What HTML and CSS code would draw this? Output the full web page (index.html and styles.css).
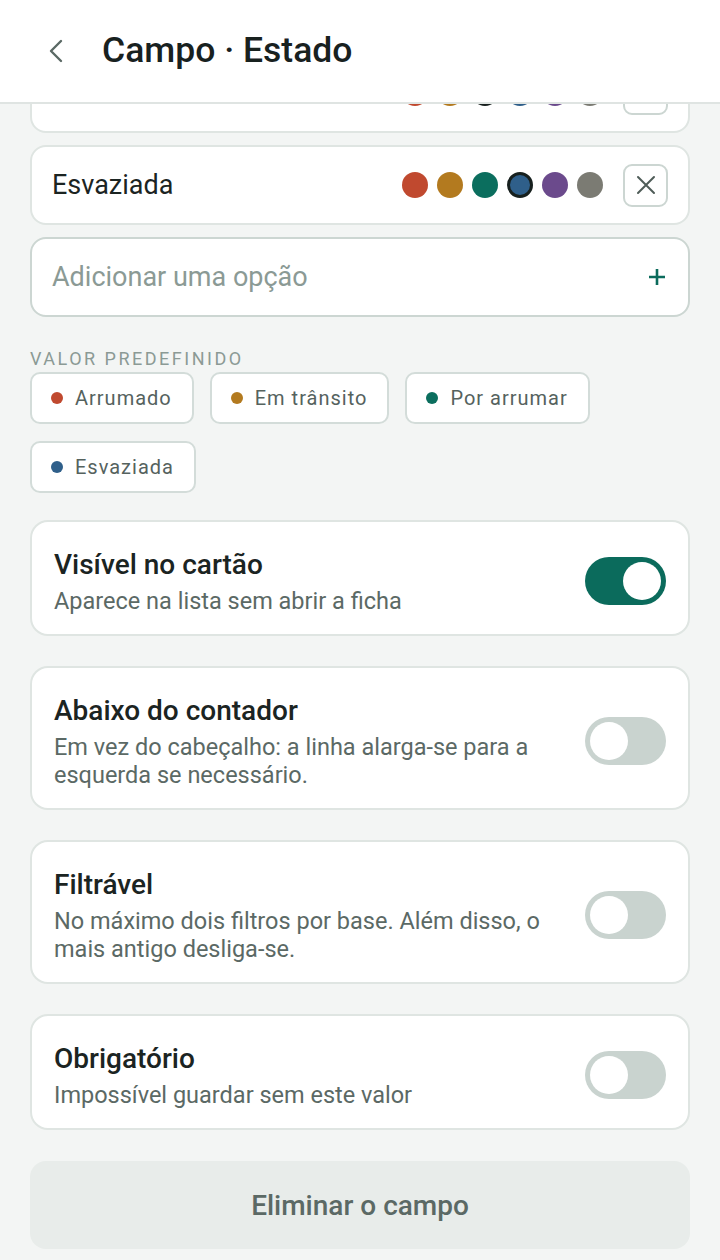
FILE: index.html
```html
<!DOCTYPE html>
<html lang="pt">
<head>
<meta charset="UTF-8">
<meta name="viewport" content="width=device-width, initial-scale=1.0">
<title>Campo · Estado</title>
<link rel="stylesheet" href="styles.css">
</head>
<body>

<header class="topbar">
    <button class="back" aria-label="Voltar">
        <svg width="14" height="24" viewBox="0 0 14 24"><path d="M12 2 L2 12 L12 22" fill="none" stroke="currentColor" stroke-width="2.4" stroke-linecap="round" stroke-linejoin="round"/></svg>
    </button>
    <h1 class="title">Campo · Estado</h1>
</header>

<main class="content">
    <!-- Options -->
    <div class="options">
        <div class="option">
            <span class="option-name">Por arrumar</span>
            <div class="swatches">
                <span class="swatch red"></span>
                <span class="swatch orange"></span>
                <span class="swatch teal selected"></span>
                <span class="swatch blue"></span>
                <span class="swatch purple"></span>
                <span class="swatch grey"></span>
            </div>
            <button class="remove" aria-label="Remover">
                <svg width="20" height="20" viewBox="0 0 20 20"><path d="M2 2 L18 18 M18 2 L2 18" stroke="currentColor" stroke-width="2" stroke-linecap="round"/></svg>
            </button>
        </div>
        <div class="option">
            <span class="option-name">Esvaziada</span>
            <div class="swatches">
                <span class="swatch red"></span>
                <span class="swatch orange"></span>
                <span class="swatch teal"></span>
                <span class="swatch blue selected"></span>
                <span class="swatch purple"></span>
                <span class="swatch grey"></span>
            </div>
            <button class="remove" aria-label="Remover">
                <svg width="20" height="20" viewBox="0 0 20 20"><path d="M2 2 L18 18 M18 2 L2 18" stroke="currentColor" stroke-width="2" stroke-linecap="round"/></svg>
            </button>
        </div>
        <div class="option add">
            <span class="placeholder">Adicionar uma opção</span>
            <svg class="plus" width="18" height="18" viewBox="0 0 18 18"><path d="M9 1 V17 M1 9 H17" stroke="currentColor" stroke-width="2.6"/></svg>
        </div>
    </div>

    <!-- Default value -->
    <div class="label">Valor predefinido</div>
    <div class="chips">
        <span class="chip"><span class="dot red"></span>Arrumado</span>
        <span class="chip"><span class="dot orange"></span>Em trânsito</span>
        <span class="chip"><span class="dot teal"></span>Por arrumar</span>
        <span class="chip"><span class="dot blue"></span>Esvaziada</span>
    </div>

    <!-- Settings -->
    <div class="settings">
        <div class="setting">
            <div class="setting-text">
                <div class="setting-title">Visível no cartão</div>
                <div class="setting-desc">Aparece na lista sem abrir a ficha</div>
            </div>
            <span class="switch on"><span class="knob"></span></span>
        </div>
        <div class="setting">
            <div class="setting-text">
                <div class="setting-title">Abaixo do contador</div>
                <div class="setting-desc">Em vez do cabeçalho: a linha alarga-se para a esquerda se necessário.</div>
            </div>
            <span class="switch"><span class="knob"></span></span>
        </div>
        <div class="setting">
            <div class="setting-text">
                <div class="setting-title">Filtrável</div>
                <div class="setting-desc">No máximo dois filtros por base. Além disso, o mais antigo desliga-se.</div>
            </div>
            <span class="switch"><span class="knob"></span></span>
        </div>
        <div class="setting">
            <div class="setting-text">
                <div class="setting-title">Obrigatório</div>
                <div class="setting-desc">Impossível guardar sem este valor</div>
            </div>
            <span class="switch"><span class="knob"></span></span>
        </div>
    </div>

    <button class="delete">Eliminar o campo</button>
</main>

</body>
</html>
```

FILE: styles.css
```css
* {
    box-sizing: border-box;
}

body {
    margin: 0;
    padding: 0;
    background-color: #f3f5f4;
    color: #1b2422;
    font-family: Roboto, "Noto Sans", sans-serif;
    overflow: hidden;
}

button {
    font-family: inherit;
    border: none;
    background: none;
    padding: 0;
}

.topbar {
    position: sticky;
    top: 0;
    z-index: 10;
    height: 104px;
    display: flex;
    align-items: center;
    background-color: #ffffff;
    border-bottom: 2px solid #dfe4e2;
}

.back {
    display: flex;
    margin-left: 49px;
    color: #5b6965;
}

.title {
    margin: 0 0 2px 39px;
    font-size: 35.5px;
    font-weight: 500;
    color: #18211f;
}

.content {
    margin-top: -51px;
    padding: 0 30px;
}

/* options */
.options {
    display: flex;
    flex-direction: column;
    gap: 12px;
}

.option {
    height: 80px;
    display: flex;
    align-items: center;
    padding: 0 20px;
    background-color: #ffffff;
    border: 2px solid #dfe5e2;
    border-radius: 16px;
}

.option-name {
    flex: 1;
    font-size: 27px;
}

.swatches {
    display: flex;
    gap: 9px;
    margin-right: 20px;
}

.swatch {
    width: 26px;
    height: 26px;
    border-radius: 50%;
}

.swatch.selected {
    border: 3px solid #17201e;
}

.red { background-color: #c0492f; }
.orange { background-color: #b37a1f; }
.teal { background-color: #0b6e5e; }
.blue { background-color: #2f5f8a; }
.purple { background-color: #6b4a8c; }
.grey { background-color: #7b7b73; }

.remove {
    width: 45px;
    height: 43px;
    display: flex;
    align-items: center;
    justify-content: center;
    border: 2px solid #ccd6d2;
    border-radius: 9px;
    color: #4f5c58;
}

.option.add {
    border-color: #ccd6d2;
    padding-right: 22px;
}

.placeholder {
    flex: 1;
    font-size: 27px;
    color: #8b9a95;
}

.plus {
    color: #0b6b5c;
}

/* default value */
.label {
    margin-top: 31px;
    font-size: 18px;
    line-height: 22px;
    letter-spacing: 2.5px;
    text-transform: uppercase;
    color: #8b9a95;
}

.chips {
    display: flex;
    flex-wrap: wrap;
    gap: 17px 16px;
    margin-top: 2px;
}

.chip {
    height: 52px;
    display: flex;
    align-items: center;
    gap: 12px;
    padding: 0 20px 0 19px;
    background-color: #ffffff;
    border: 2px solid #d3dcd9;
    border-radius: 10px;
    font-size: 20px;
    letter-spacing: 1px;
    color: #55625e;
}

.dot {
    width: 12px;
    height: 12px;
    border-radius: 50%;
}

/* settings */
.settings {
    display: flex;
    flex-direction: column;
    gap: 30px;
    margin-top: 27px;
}

.setting {
    display: flex;
    align-items: center;
    gap: 24px;
    padding: 25px 22px 19px 22px;
    background-color: #ffffff;
    border: 2px solid #dfe5e2;
    border-radius: 18px;
}

.setting-text {
    flex: 1;
}

.setting-title {
    font-size: 28px;
    font-weight: 500;
    line-height: 36px;
    margin-bottom: 4px;
}

.setting-desc {
    font-size: 23.5px;
    line-height: 28px;
    color: #5b6965;
}

.switch {
    flex: 0 0 auto;
    width: 81px;
    height: 48px;
    display: flex;
    align-items: center;
    padding: 0 5px;
    border-radius: 24px;
    background-color: #c9d3cf;
}

.switch.on {
    justify-content: flex-end;
    background-color: #0b6b5c;
}

.knob {
    width: 38px;
    height: 38px;
    border-radius: 50%;
    background-color: #ffffff;
}

.delete {
    display: block;
    width: 100%;
    height: 88px;
    margin-top: 31px;
    border-radius: 16px;
    background-color: #e8ecea;
    font-size: 28px;
    font-weight: 500;
    color: #5b6965;
}
```
